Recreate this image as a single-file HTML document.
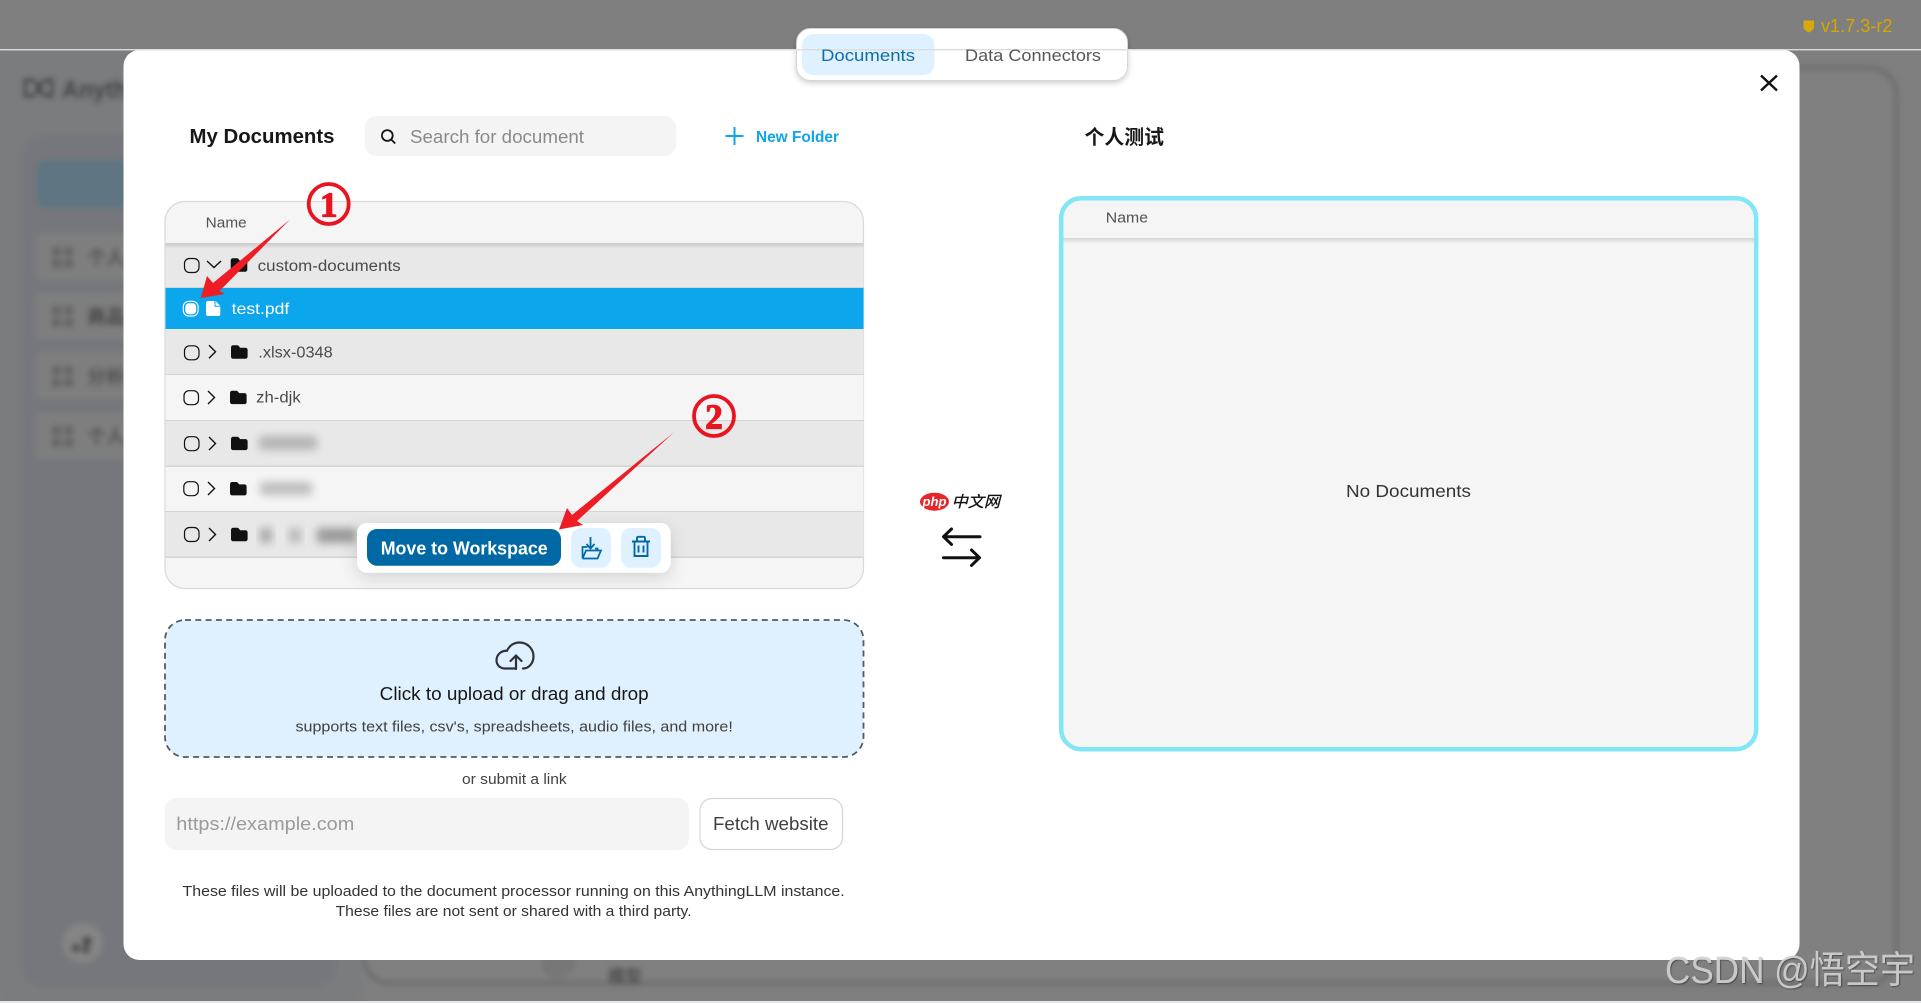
<!DOCTYPE html>
<html lang="en">
<head>
<meta charset="utf-8">
<title>Documents</title>
<style>
html,body{margin:0;padding:0;width:1921px;height:1003px;overflow:hidden;background:#7f7f7f}
svg{display:block;position:absolute;left:0;top:0}
text{font-family:"Liberation Sans","Noto Sans CJK SC",sans-serif;white-space:pre}
</style>
</head>
<body>
<svg xmlns="http://www.w3.org/2000/svg" width="1921" height="1003" viewBox="0 0 1921 1003">
<defs>
<filter id="b4" x="-20%" y="-20%" width="140%" height="140%"><feGaussianBlur stdDeviation="3"/></filter>
<filter id="b5" x="-30%" y="-60%" width="160%" height="220%"><feGaussianBlur stdDeviation="4.500"/></filter>
<filter id="sh" x="-20%" y="-40%" width="140%" height="200%"><feDropShadow dx="0" dy="5" stdDeviation="8" flood-color="#000" flood-opacity=".14"/></filter>
<filter id="sh2" x="-10%" y="-30%" width="120%" height="170%"><feDropShadow dx="0" dy="2" stdDeviation="3" flood-color="#000" flood-opacity=".2"/></filter>
<filter id="wm" x="-5%" y="-10%" width="110%" height="130%"><feDropShadow dx="1" dy="1" stdDeviation=".6" flood-color="#000" flood-opacity=".45"/></filter>
<linearGradient id="hg" x1="0" y1="0" x2="0" y2="1"><stop offset="0" stop-color="#000" stop-opacity=".13"/><stop offset="1" stop-color="#000" stop-opacity="0"/></linearGradient>
<path id="fo" d="M0 2.200C0 1 .9 0 2 0h4.300c.5 0 1 .2 1.300.6L9.200 2.400h5.400c1.100 0 2 .9 2 2v7c0 1.100-.9 2-2 2H2c-1.100 0-2-.9-2-2z" fill="#111"/>
<path id="cr" d="M0 0l6.500 6.500L0 13" fill="none" stroke="#111" stroke-width="1.400"/>
</defs>

<!-- dimmed background -->
<rect width="1921" height="1003" fill="#7f7f7f"/>
<g filter="url(#b4)">
  <rect x="0" y="52" width="360" height="950" fill="#7a7c7e"/>
  <rect x="22" y="135" width="314" height="852" rx="22" fill="#74777c"/>
  <rect x="37" y="160" width="300" height="48" rx="8" fill="#5e7481"/>
  <rect x="35" y="233" width="300" height="47" rx="6" fill="#7e7e7e"/>
  <rect x="35" y="293" width="300" height="47" rx="6" fill="#7e7e7e"/>
  <rect x="35" y="352" width="300" height="47" rx="6" fill="#7e7e7e"/>
  <rect x="35" y="412" width="300" height="47" rx="6" fill="#7e7e7e"/>
  <g fill="#656565">
    <rect x="52" y="247" width="9" height="9"/><rect x="64" y="247" width="9" height="9"/><rect x="52" y="259" width="9" height="9"/><rect x="64" y="259" width="9" height="9"/>
    <rect x="52" y="306" width="9" height="9"/><rect x="64" y="306" width="9" height="9"/><rect x="52" y="318" width="9" height="9"/><rect x="64" y="318" width="9" height="9"/>
    <rect x="52" y="366" width="9" height="9"/><rect x="64" y="366" width="9" height="9"/><rect x="52" y="378" width="9" height="9"/><rect x="64" y="378" width="9" height="9"/>
    <rect x="52" y="426" width="9" height="9"/><rect x="64" y="426" width="9" height="9"/><rect x="52" y="438" width="9" height="9"/><rect x="64" y="438" width="9" height="9"/>
  </g>
  <text x="87" y="264" font-size="19" font-weight="bold" fill="#4a4a4a">个人</text>
  <text x="87" y="323" font-size="19" font-weight="bold" fill="#3a3a3a">商品</text>
  <text x="87" y="383" font-size="19" font-weight="bold" fill="#4a4a4a">分析</text>
  <text x="87" y="443" font-size="19" font-weight="bold" fill="#4a4a4a">个人</text>
  <path d="M25 80h6c4 0 6 5 8 8s4 8 8 8h5V80h-5c-4 0-6 5-8 8s-4 8-8 8h-6z" fill="none" stroke="#333" stroke-width="3"/>
  <text x="62" y="98" font-size="25" font-weight="bold" textLength="66" lengthAdjust="spacingAndGlyphs" fill="#383838">Anyth</text>
  <circle cx="82.600" cy="943" r="20" fill="#858585"/>
  <circle cx="76" cy="948" r="4.500" fill="#4a4a4a"/><circle cx="87" cy="941" r="5" fill="#4a4a4a"/><circle cx="86" cy="950" r="4" fill="#4a4a4a"/>
  <rect x="364" y="68" width="1532" height="915" rx="26" fill="#808080" stroke="#6a6a6a" stroke-width="4"/>
  <circle cx="558" cy="962" r="17" fill="#777"/>
  <text x="608" y="982" font-size="17" font-weight="bold" fill="#444">模型</text>
</g>
<rect x="0" y="1001" width="1921" height="2" fill="#e4e8ea"/>

<!-- modal -->
<rect x="123.500" y="50" width="1676" height="910" rx="16" fill="#fff"/>

<!-- top line + tabs -->
<rect x="796.500" y="28.500" width="331" height="52" rx="14" fill="#fff" stroke="#d6d6d6" filter="url(#sh2)"/>
<rect x="802" y="34" width="132.500" height="41" rx="11" fill="#dff1ff"/>
<rect x="0" y="49" width="1921" height="1.400" fill="#dcdcdc"/>
<text x="821" y="61" font-size="17" textLength="94" lengthAdjust="spacingAndGlyphs" fill="#0e6ea6">Documents</text>
<text x="965" y="61" font-size="17" textLength="136" lengthAdjust="spacingAndGlyphs" fill="#565656">Data Connectors</text>

<!-- version -->
<path d="M1803.500 20.500h10.500v6c0 3-2.500 4.800-5.200 6-2.800-1.200-5.300-3-5.300-6z" fill="#d8a90a"/>
<text x="1821" y="32" font-size="18" textLength="71.500" lengthAdjust="spacingAndGlyphs" fill="#d6a600">v1.7.3-r2</text>

<!-- close -->
<path d="M1761 75.500l16 15M1777 75.500l-16 15" stroke="#111" stroke-width="2.400" fill="none"/>

<!-- header row -->
<text x="189.500" y="143" font-size="20" font-weight="bold" textLength="145" lengthAdjust="spacingAndGlyphs" fill="#171717">My Documents</text>
<rect x="364.500" y="116" width="311.500" height="40" rx="12" fill="#f4f4f5"/>
<circle cx="387.300" cy="135.500" r="5.400" fill="none" stroke="#171717" stroke-width="1.800"/>
<path d="M391.200 139.500l4 4" stroke="#171717" stroke-width="1.800"/>
<text x="410" y="143" font-size="18" textLength="174" lengthAdjust="spacingAndGlyphs" fill="#8a8a8a">Search for document</text>
<path d="M734.500 127v18M725.500 136h18" stroke="#0ea5e9" stroke-width="2"/>
<text x="756" y="142" font-size="15.500" font-weight="bold" textLength="83" lengthAdjust="spacingAndGlyphs" fill="#0ea5e9">New Folder</text>

<!-- left table -->
<rect x="165" y="201.500" width="698.500" height="387" rx="20" fill="#f5f5f5" stroke="#d9d9d9" stroke-width="1.200"/>
<rect x="165.500" y="243" width="698" height="45" fill="#e8e8e8"/>
<rect x="165.500" y="243" width="698" height="6" fill="url(#hg)"/>
<text x="205.700" y="227.700" font-size="15" textLength="41" lengthAdjust="spacingAndGlyphs" fill="#525252">Name</text>
<rect x="165.500" y="287" width="698" height="1.400" fill="#d4d4d4"/>
<rect x="165.500" y="288" width="698" height="41" fill="#0ca6ec"/>
<rect x="165.500" y="329" width="698" height="46" fill="#e8e8e8"/>
<rect x="165.500" y="374" width="698" height="1.500" fill="#d4d4d4"/>
<rect x="165.500" y="375" width="698" height="45" fill="#f5f5f5"/>
<rect x="165.500" y="420" width="698" height="1.500" fill="#d4d4d4"/>
<rect x="165.500" y="421" width="698" height="45" fill="#e8e8e8"/>
<rect x="165.500" y="465.500" width="698" height="1.500" fill="#d4d4d4"/>
<rect x="165.500" y="467" width="698" height="45" fill="#f5f5f5"/>
<rect x="165.500" y="511" width="698" height="1.500" fill="#d4d4d4"/>
<rect x="165.500" y="512" width="698" height="45" fill="#e8e8e8"/>
<rect x="165.500" y="556.500" width="698" height="1.500" fill="#d4d4d4"/>

<!-- row 1 -->
<rect x="184.500" y="258.500" width="14.500" height="14" rx="5" fill="none" stroke="#111" stroke-width="1.200"/>
<path d="M207 261l7 6.500 7-6.500" fill="none" stroke="#111" stroke-width="1.400"/>
<use href="#fo" x="230.700" y="258.300"/>
<text x="257.700" y="271" font-size="15.500" textLength="143" lengthAdjust="spacingAndGlyphs" fill="#4a4a4a">custom-documents</text>
<!-- row 2 -->
<rect x="183.300" y="301.300" width="14.800" height="14.800" rx="5.500" fill="none" stroke="#fff" stroke-width="1.100"/>
<rect x="185.300" y="303.200" width="10.800" height="11" rx="3.500" fill="#fff"/>
<path d="M208 301h6.500v5.800h5.800V314a2 2 0 0 1-2 2H208a2 2 0 0 1-2-2V303a2 2 0 0 1 2-2z" fill="#fff"/>
<path d="M215.500 301l4.800 4.800h-4.800z" fill="#fff"/>
<text x="231.700" y="314" font-size="16" textLength="57.600" lengthAdjust="spacingAndGlyphs" fill="#fff">test.pdf</text>
<!-- row 3 -->
<rect x="184.500" y="345.800" width="14.500" height="14" rx="5" fill="none" stroke="#111" stroke-width="1.200"/>
<use href="#cr" x="209" y="345.300"/>
<use href="#fo" x="231" y="345.300"/>
<text x="258.300" y="357.700" font-size="15.500" textLength="74.400" lengthAdjust="spacingAndGlyphs" fill="#4a4a4a">.xlsx-0348</text>
<!-- row 4 -->
<rect x="184" y="390.700" width="14.500" height="14" rx="5" fill="none" stroke="#111" stroke-width="1.200"/>
<use href="#cr" x="208" y="391"/>
<use href="#fo" x="230" y="390.700"/>
<text x="256.200" y="402.700" font-size="15.500" textLength="44.500" lengthAdjust="spacingAndGlyphs" fill="#4a4a4a">zh-djk</text>
<!-- row 5 -->
<rect x="184.500" y="436.700" width="14.500" height="14" rx="5" fill="none" stroke="#111" stroke-width="1.200"/>
<use href="#cr" x="209" y="437"/>
<use href="#fo" x="231" y="436.700"/>
<rect x="259" y="436" width="58" height="14" rx="3" fill="#b4b4b4" filter="url(#b5)"/>
<!-- row 6 -->
<rect x="183.800" y="481.700" width="14.500" height="14" rx="5" fill="none" stroke="#111" stroke-width="1.200"/>
<use href="#cr" x="208" y="482"/>
<use href="#fo" x="230" y="482"/>
<rect x="260" y="482" width="52" height="13" rx="3" fill="#bcbcbc" filter="url(#b5)"/>
<!-- row 7 -->
<rect x="184.500" y="527.500" width="14.500" height="14" rx="5" fill="none" stroke="#111" stroke-width="1.200"/>
<use href="#cr" x="209" y="528"/>
<use href="#fo" x="231" y="527.800"/>
<rect x="260" y="528" width="12" height="15" fill="#a8a8a8" filter="url(#b5)"/>
<rect x="289" y="528" width="12" height="15" fill="#b8b8b8" filter="url(#b5)"/>
<rect x="317" y="528" width="39" height="15" fill="#9a9a9a" filter="url(#b5)"/>

<!-- popup -->
<rect x="357" y="523" width="313.700" height="49.700" rx="10" fill="#fff" filter="url(#sh)"/>
<rect x="367" y="529" width="194" height="36.700" rx="10" fill="#0069a5"/>
<text x="380.700" y="554.300" font-size="18.500" font-weight="bold" textLength="167" lengthAdjust="spacingAndGlyphs" fill="#fff">Move to Workspace</text>
<rect x="571" y="528" width="40" height="39.700" rx="10" fill="#dff1ff"/>
<rect x="621" y="528" width="40" height="39.700" rx="10" fill="#dff1ff"/>
<path d="M590.500 537v11M586.500 544l4 4.500 4-4.500" fill="none" stroke="#0069a5" stroke-width="1.800"/>
<path d="M582.500 558.500V547h5M582.500 558.500h15l3.500-8h-3.500v-2h-2.500M582.500 558.500l3.500-8h11.500" fill="none" stroke="#0069a5" stroke-width="1.700"/>
<path d="M632 541.500h18M637 541v-3a1.200 1.200 0 0 1 1.200-1.200h5.600A1.200 1.200 0 0 1 645 538v3M634.500 541.500V556h13V541.500M638.500 545.500v7M643.500 545.500v7" fill="none" stroke="#0069a5" stroke-width="1.900"/>

<!-- upload -->
<rect x="165" y="620" width="698.500" height="137" rx="20" fill="#dff1ff" stroke="#525a64" stroke-width="1.800" stroke-dasharray="6 4.300"/>
<path d="M523 668.500c6 0 10.500-5.500 10.500-12 0-8-6.300-14-14-14-5.700 0-10.300 3.300-12.500 8.300-6-.3-10.500 4-10.500 9.500 0 5 3.800 8.200 9 8.200h9" fill="none" stroke="#2d3238" stroke-width="2.200" stroke-linecap="round"/>
<path d="M516 669v-13M510.500 661l5.500-5.500 5.500 5.500" fill="none" stroke="#2d3238" stroke-width="2.200" stroke-linecap="round"/>
<text x="379.700" y="700" font-size="18" textLength="269" lengthAdjust="spacingAndGlyphs" fill="#171717">Click to upload or drag and drop</text>
<text x="295.500" y="731.700" font-size="15" textLength="437.300" lengthAdjust="spacingAndGlyphs" fill="#404040">supports text files, csv's, spreadsheets, audio files, and more!</text>
<text x="462" y="784" font-size="15" textLength="104.700" lengthAdjust="spacingAndGlyphs" fill="#404040">or submit a link</text>

<rect x="164.500" y="798" width="524.500" height="52" rx="12" fill="#f4f4f4"/>
<text x="176.300" y="830" font-size="18" textLength="178" lengthAdjust="spacingAndGlyphs" fill="#9a9a9a">https://example.com</text>
<rect x="700" y="798.500" width="142.500" height="51" rx="12" fill="#fff" stroke="#d4d4d4" stroke-width="1.200"/>
<text x="713" y="830" font-size="18" textLength="115.500" lengthAdjust="spacingAndGlyphs" fill="#404040">Fetch website</text>

<text x="182.500" y="896" font-size="15" textLength="662.200" lengthAdjust="spacingAndGlyphs" fill="#333">These files will be uploaded to the document processor running on this AnythingLLM instance.</text>
<text x="335.600" y="916" font-size="15" textLength="356" lengthAdjust="spacingAndGlyphs" fill="#333">These files are not sent or shared with a third party.</text>

<!-- middle -->
<ellipse cx="934.500" cy="501.700" rx="14.500" ry="9" fill="#e8262a"/>
<text x="922.500" y="506" font-size="13" font-weight="bold" font-style="italic" textLength="24" lengthAdjust="spacingAndGlyphs" fill="#fff">php</text>
<text x="951.700" y="507" font-size="15.500" font-style="italic" textLength="48.300" lengthAdjust="spacingAndGlyphs" fill="#111" stroke="#111" stroke-width=".3">中文网</text>
<path d="M980 536.700H944M951.500 529l-8 7.700 8 7.700" fill="none" stroke="#111" stroke-width="3" stroke-linecap="round" stroke-linejoin="round"/>
<path d="M943.500 557.700H979M971.500 550l8 7.700-8 7.700" fill="none" stroke="#111" stroke-width="3" stroke-linecap="round" stroke-linejoin="round"/>

<!-- right panel -->
<text x="1084.500" y="144" font-size="20" font-weight="bold" textLength="79.500" lengthAdjust="spacingAndGlyphs" fill="#171717">个人测试</text>
<rect x="1061.200" y="198.200" width="695" height="551" rx="20" fill="#f5f5f5"/>
<rect x="1063.500" y="238" width="690.500" height="6" fill="url(#hg)"/>
<rect x="1061.200" y="198.200" width="695" height="551" rx="20" fill="none" stroke="#81e6f5" stroke-width="4.500"/>
<text x="1105.800" y="222.700" font-size="15" textLength="42.200" lengthAdjust="spacingAndGlyphs" fill="#525252">Name</text>
<text x="1346" y="497" font-size="17.500" textLength="125" lengthAdjust="spacingAndGlyphs" fill="#333">No Documents</text>

<!-- annotations -->
<circle cx="328.700" cy="204" r="20" fill="none" stroke="#e8141f" stroke-width="3.800"/>
<text x="328.700" y="216.500" font-size="35" font-weight="bold" text-anchor="middle" style="font-family:'Liberation Serif',serif" fill="#e8141f" stroke="#e8141f" stroke-width="1.200">1</text>
<path d="M290 219.500L219.500 291 225 294 200.700 298 207 276 213 283z" fill="#ee1c25"/>
<circle cx="714" cy="416" r="20" fill="none" stroke="#e8141f" stroke-width="3.800"/>
<text x="714" y="428.500" font-size="35" font-weight="bold" text-anchor="middle" style="font-family:'Liberation Serif',serif" fill="#e8141f" stroke="#e8141f" stroke-width="1.200">2</text>
<path d="M674 432.300L577 521 583 525 559 529.500 567 508 572 515z" fill="#ee1c25"/>

<!-- watermark -->
<text x="1665" y="983" font-size="38" textLength="250" lengthAdjust="spacingAndGlyphs" fill="#d4d4d4" fill-opacity=".88" filter="url(#wm)">CSDN @悟空宇</text>
</svg>
</body>
</html>
